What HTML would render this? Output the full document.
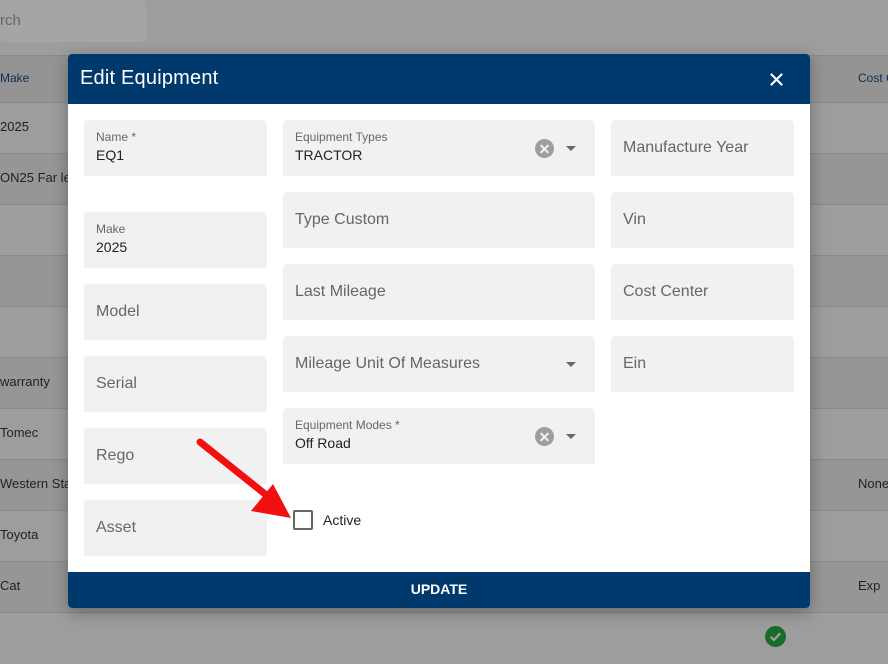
<!DOCTYPE html>
<html><head><meta charset="utf-8"><style>
*{box-sizing:border-box;margin:0;padding:0}
body{width:888px;height:664px;overflow:hidden;background:#9d9d9d;font-family:"Liberation Sans",sans-serif;position:relative}
.abs{position:absolute}
.row{position:absolute;left:0;width:888px;border-top:1px solid #8a8a8a}
.bgt{position:absolute;font-size:13px;color:#222;white-space:nowrap}
.modal{position:absolute;left:68px;top:54px;width:742px;height:554px;background:#fff;border-radius:4px;overflow:hidden;box-shadow:0 4px 16px rgba(0,0,0,.3)}
.hdr{position:absolute;left:0;top:0;width:742px;height:50px;background:#003a6d;color:#fff;font-size:20px;padding:13px 12px;letter-spacing:0.2px}
.f{position:absolute;background:#f1f1f1;border-radius:4px 4px 0 0;height:56px}
.f .l{position:absolute;left:12px;top:10px;font-size:12px;color:#666}
.f .v{position:absolute;left:12px;top:27px;font-size:14px;color:#222}
.f .p{position:absolute;left:12px;top:19px;font-size:16px;color:#666}
.clr{position:absolute;width:19px;height:19px;border-radius:50%;background:#9e9e9e;top:19px}
.clr:before,.clr:after{content:"";position:absolute;left:4px;top:8.5px;width:11px;height:2px;background:#f1f1f1;transform:rotate(45deg)}
.clr:after{transform:rotate(-45deg)}
.car{position:absolute;top:26px;width:0;height:0;border-left:5px solid transparent;border-right:5px solid transparent;border-top:5px solid #666}
.btn{position:absolute;left:0;top:518px;width:742px;height:36px;background:#003a6d;color:#fff;font-weight:bold;font-size:14px;text-align:center;line-height:34px}
</style></head><body>
<div class="abs" style="left:0;top:0;width:146px;height:42px;background:#a5a5a5;border-radius:4px"></div>
<div class="bgt" style="left:0;top:12px;font-size:15px;color:#666">rch</div>
<div class="row" style="top:55px;height:47px;background:#949494"></div>
<div class="bgt" style="left:0;top:71px;font-size:12px;color:#0d2c50">Make</div>
<div class="bgt" style="left:858px;top:71px;font-size:12px;color:#0d2c50">Cost C</div>
<div class="row" style="top:102px;height:51px;background:#9d9d9d"></div>
<div class="row" style="top:153px;height:51px;background:#969696"></div>
<div class="row" style="top:204px;height:51px;background:#9d9d9d"></div>
<div class="row" style="top:255px;height:51px;background:#969696"></div>
<div class="row" style="top:306px;height:51px;background:#9d9d9d"></div>
<div class="row" style="top:357px;height:51px;background:#969696"></div>
<div class="row" style="top:408px;height:51px;background:#9d9d9d"></div>
<div class="row" style="top:459px;height:51px;background:#969696"></div>
<div class="row" style="top:510px;height:51px;background:#9d9d9d"></div>
<div class="row" style="top:561px;height:51px;background:#969696"></div>
<div class="row" style="top:612px;height:52px;background:#9d9d9d"></div>
<div class="bgt" style="left:0;top:119px">2025</div>
<div class="bgt" style="left:0;top:170px">ON25 Far left</div>
<div class="bgt" style="left:0;top:374px">warranty</div>
<div class="bgt" style="left:0;top:425px">Tomec</div>
<div class="bgt" style="left:0;top:476px">Western Star</div>
<div class="bgt" style="left:858px;top:476px">None</div>
<div class="bgt" style="left:0;top:527px">Toyota</div>
<div class="bgt" style="left:0;top:578px">Cat</div>
<div class="bgt" style="left:858px;top:578px">Exp</div>
<svg class="abs" style="left:765px;top:626px" width="21" height="21" viewBox="0 0 20 20"><circle cx="10" cy="10" r="10" fill="#1a6b2a"/><path d="M5.5 10.3l3 3 6-6.3" stroke="#9d9d9d" stroke-width="2.2" fill="none"/></svg>

<div class="modal">
<div class="hdr">Edit Equipment</div>
<svg class="abs" style="left:701px;top:18px" width="15" height="15" viewBox="0 0 16 16"><path d="M2 2L14 14M14 2L2 14" stroke="#fff" stroke-width="2.2"/></svg>

<div class="f" style="left:16px;top:66px;width:183px"><div class="l">Name *</div><div class="v">EQ1</div></div>
<div class="f" style="left:16px;top:158px;width:183px"><div class="l">Make</div><div class="v">2025</div></div>
<div class="f" style="left:16px;top:230px;width:183px"><div class="p">Model</div></div>
<div class="f" style="left:16px;top:302px;width:183px"><div class="p">Serial</div></div>
<div class="f" style="left:16px;top:374px;width:183px"><div class="p">Rego</div></div>
<div class="f" style="left:16px;top:446px;width:183px"><div class="p">Asset</div></div>

<div class="f" style="left:215px;top:66px;width:312px"><div class="l">Equipment Types</div><div class="v">TRACTOR</div><div class="clr" style="left:252px"></div><div class="car" style="left:283px"></div></div>
<div class="f" style="left:215px;top:138px;width:312px"><div class="p">Type Custom</div></div>
<div class="f" style="left:215px;top:210px;width:312px"><div class="p">Last Mileage</div></div>
<div class="f" style="left:215px;top:282px;width:312px"><div class="p">Mileage Unit Of Measures</div><div class="car" style="left:283px"></div></div>
<div class="f" style="left:215px;top:354px;width:312px"><div class="l">Equipment Modes *</div><div class="v">Off Road</div><div class="clr" style="left:252px"></div><div class="car" style="left:283px"></div></div>

<div class="f" style="left:543px;top:66px;width:183px"><div class="p">Manufacture Year</div></div>
<div class="f" style="left:543px;top:138px;width:183px"><div class="p">Vin</div></div>
<div class="f" style="left:543px;top:210px;width:183px"><div class="p">Cost Center</div></div>
<div class="f" style="left:543px;top:282px;width:183px"><div class="p">Ein</div></div>

<div class="abs" style="left:225px;top:456px;width:20px;height:20px;border:2px solid #666;border-radius:2px"></div>
<div class="abs" style="left:255px;top:458px;font-size:14px;color:#222">Active</div>
<div class="btn">UPDATE</div>
</div>
<svg class="abs" style="left:195px;top:434px" width="100" height="100" viewBox="0 0 100 100"><path d="M5 8L70 60" stroke="#f01010" stroke-width="7" stroke-linecap="round"/><path d="M96 84L56 77L78 50Z" fill="#f01010"/></svg>
</body></html>
